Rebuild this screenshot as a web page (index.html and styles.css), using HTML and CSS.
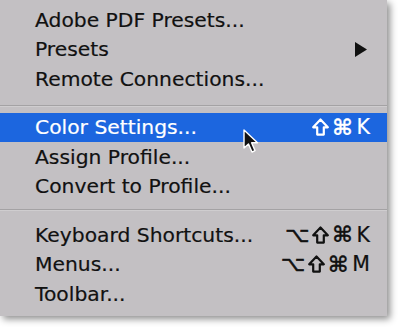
FILE: index.html
```html
<!DOCTYPE html>
<html>
<head>
<meta charset="utf-8">
<link rel="stylesheet" href="styles.css">
</head>
<body>
<div class="menu">
  <div class="row"><span class="label">Adobe PDF Presets...</span></div>
  <div class="row"><span class="label">Presets</span>
    <svg class="submenu" width="12" height="15" viewBox="0 0 12 15"><polygon points="0,0 12,7.5 0,15" fill="#111"/></svg>
  </div>
  <div class="row"><span class="label">Remote Connections...</span></div>
  <div class="sep sep1"></div>
  <div class="row active"><span class="label">Color Settings...</span>
    <span class="key">
      <svg class="shift" width="17" height="18" viewBox="0 0 17 18"><path d="M8.5 1.5 L15.8 9.3 L11.8 9.3 L11.8 16.6 L5.2 16.6 L5.2 9.3 L1.2 9.3 Z" fill="none" stroke="currentColor" stroke-width="2.2" stroke-linejoin="round"/></svg>
      <span class="sym">⌘</span><span class="ltr">K</span>
    </span>
    <svg class="cursor" width="16" height="25" viewBox="0 0 16 25"><path d="M1 1 L1 19 L5.5 15 L9 23 L12 21.6 L8.6 13.8 L14.5 13.8 Z" fill="#111" stroke="#fff" stroke-width="1.4" stroke-linejoin="round"/></svg>
  </div>
  <div class="row"><span class="label">Assign Profile...</span></div>
  <div class="row"><span class="label">Convert to Profile...</span></div>
  <div class="sep sep2"></div>
  <div class="row"><span class="label">Keyboard Shortcuts...</span>
    <span class="key">
      <span class="opt">⌥</span>
      <svg class="shift" width="17" height="18" viewBox="0 0 17 18"><path d="M8.5 1.5 L15.8 9.3 L11.8 9.3 L11.8 16.6 L5.2 16.6 L5.2 9.3 L1.2 9.3 Z" fill="none" stroke="currentColor" stroke-width="2.2" stroke-linejoin="round"/></svg>
      <span class="sym">⌘</span><span class="ltr">K</span>
    </span>
  </div>
  <div class="row"><span class="label">Menus...</span>
    <span class="key">
      <span class="opt">⌥</span>
      <svg class="shift" width="17" height="18" viewBox="0 0 17 18"><path d="M8.5 1.5 L15.8 9.3 L11.8 9.3 L11.8 16.6 L5.2 16.6 L5.2 9.3 L1.2 9.3 Z" fill="none" stroke="currentColor" stroke-width="2.2" stroke-linejoin="round"/></svg>
      <span class="sym">⌘</span><span class="ltr">M</span>
    </span>
  </div>
  <div class="row"><span class="label">Toolbar...</span></div>
</div>
</body>
</html>
```
FILE: styles.css
```css
html, body {
  margin: 0;
  padding: 0;
  background: #ffffff;
}
body {
  width: 400px;
  height: 332px;
  overflow: hidden;
}
.menu {
  width: 387px;
  background: #c3c0c3;
  padding: 5px 0 7px 0;
  box-shadow: 3px 3px 7px rgba(0, 0, 0, 0.45);
  font-family: "DejaVu Sans", sans-serif;
  font-size: 20.3px;
  color: #111;
  -webkit-text-stroke: 0.2px currentColor;
}
.row {
  position: relative;
  height: 29.5px;
  display: flex;
  align-items: center;
  justify-content: space-between;
  padding: 0 17px 0 35px;
}
.row.active {
  background: #1c66df;
  color: #ffffff;
}
.label {
  white-space: nowrap;
}
.key {
  display: flex;
  align-items: center;
  gap: 3px;
  white-space: nowrap;
  font-size: 20.5px;
}
.sym {
  font-weight: bold;
  font-size: 22px;
}
.opt {
  font-size: 21px;
  -webkit-text-stroke: 0.6px currentColor;
}
.ltr {
  margin-left: 1px;
}
.shift {
  display: block;
}
.submenu {
  margin-right: 3px;
}
.sep {
  border-top: 1px solid #a4a2a4;
  border-bottom: 1px solid #cfcdcf;
}
.sep1 {
  margin: 11px 0 6px 0;
}
.sep2 {
  margin: 8px 0 9px 0;
}
.cursor {
  position: absolute;
  left: 243px;
  top: 16px;
}
```
